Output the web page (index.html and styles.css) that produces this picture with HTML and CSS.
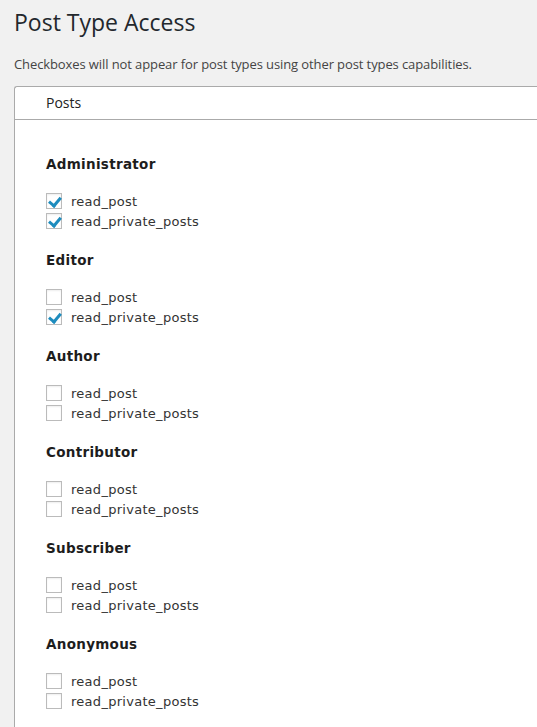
FILE: index.html
```html
<!DOCTYPE html>
<html>
<head>
<meta charset="utf-8">
<link rel="stylesheet" href="styles.css">
</head>
<body>
<div class="wrap">
  <h1 class="title">Post Type Access</h1>
  <p class="desc">Checkboxes will not appear for post types using other post types capabilities.</p>
  <div class="panel">
    <div class="panel-head">Posts</div>
    <div class="panel-body">
      <div class="role">
        <h3 class="role-name">Administrator</h3>
        <label class="cap"><span class="box checked"></span>read_post</label>
        <label class="cap"><span class="box checked"></span>read_private_posts</label>
      </div>
      <div class="role">
        <h3 class="role-name">Editor</h3>
        <label class="cap"><span class="box"></span>read_post</label>
        <label class="cap"><span class="box checked"></span>read_private_posts</label>
      </div>
      <div class="role">
        <h3 class="role-name">Author</h3>
        <label class="cap"><span class="box"></span>read_post</label>
        <label class="cap"><span class="box"></span>read_private_posts</label>
      </div>
      <div class="role">
        <h3 class="role-name">Contributor</h3>
        <label class="cap"><span class="box"></span>read_post</label>
        <label class="cap"><span class="box"></span>read_private_posts</label>
      </div>
      <div class="role">
        <h3 class="role-name">Subscriber</h3>
        <label class="cap"><span class="box"></span>read_post</label>
        <label class="cap"><span class="box"></span>read_private_posts</label>
      </div>
      <div class="role">
        <h3 class="role-name">Anonymous</h3>
        <label class="cap"><span class="box"></span>read_post</label>
        <label class="cap"><span class="box"></span>read_private_posts</label>
      </div>
    </div>
  </div>
</div>
</body>
</html>
```
FILE: styles.css
```css
html, body {
  margin: 0;
  padding: 0;
  background: #f1f1f1;
  height: 100%;
  overflow: hidden;
}
.wrap {
  padding-left: 14px;
  padding-top: 7px;
}
.title {
  margin: 0;
  font-family: "Open Sans", sans-serif;
  font-weight: 400;
  font-size: 23px;
  line-height: 30px;
  color: #23282d;
}
.desc {
  margin: 17px 0 0;
  font-family: "Open Sans", sans-serif;
  font-size: 13px;
  letter-spacing: -0.1px;
  line-height: 20px;
  color: #444;
}
.panel {
  margin-top: 12px;
  background: #fff;
  border-top: 1px solid #aaa;
  border-left: 1px solid #aaa;
  border-top-left-radius: 3px;
  margin-right: -10px;
}
.panel-head {
  height: 32px;
  border-bottom: 1px solid #aaa;
  padding-left: 31px;
  font-family: "Open Sans", sans-serif;
  font-size: 14px;
  line-height: 32px;
  color: #222;
}
.panel-body {
  padding: 34px 0 16px 31px;
  display: flex;
  flex-direction: column;
  gap: 19px;
}
.role {
  display: flex;
  flex-direction: column;
}
.role-name {
  margin: 0 0 17px;
  font-family: "DejaVu Sans", Verdana, sans-serif;
  font-weight: bold;
  font-size: 13.5px;
  letter-spacing: 0.3px;
  line-height: 20px;
  color: #1d1d1d;
}
.cap {
  display: flex;
  align-items: center;
  height: 20px;
  font-family: "DejaVu Sans", Verdana, sans-serif;
  font-size: 13px;
  letter-spacing: 0.28px;
  color: #333;
}
.box {
  box-sizing: border-box;
  width: 16px;
  height: 16px;
  border: 1px solid #bbb;
  background: #fff;
  box-shadow: inset 0 1px 2px rgba(0,0,0,0.07);
  margin-right: 9px;
  position: relative;
}
.box.checked::after {
  content: "";
  position: absolute;
  left: 3px;
  top: 1px;
  width: 5px;
  height: 9px;
  border-right: 3px solid #1e8cbe;
  border-bottom: 3px solid #1e8cbe;
  transform: rotate(40deg);
  transform-origin: 60% 60%;
}
```
